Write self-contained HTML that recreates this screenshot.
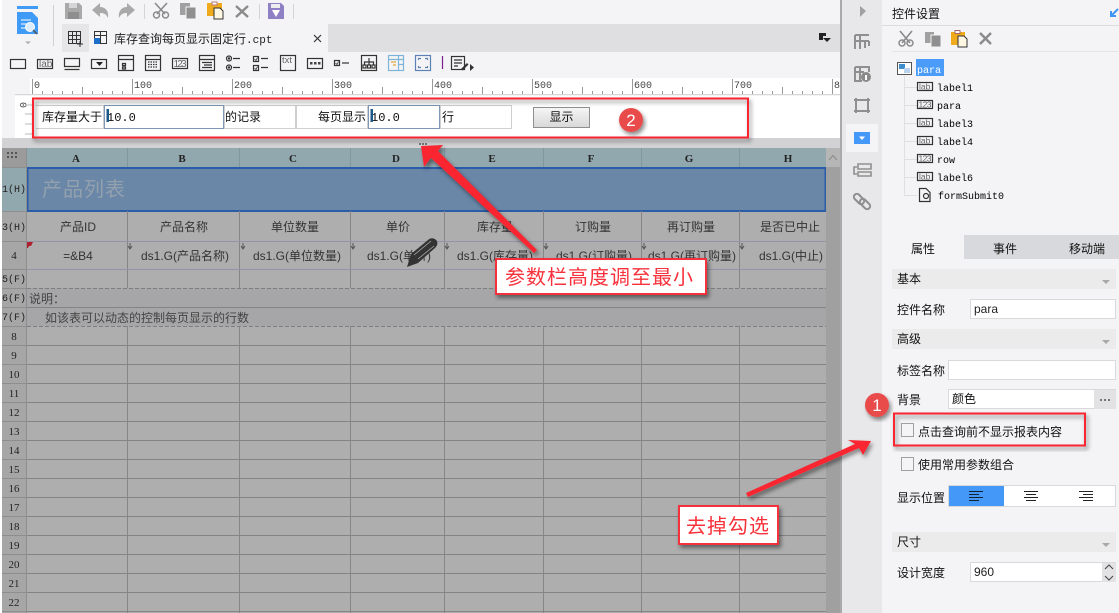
<!DOCTYPE html>
<html><head><meta charset="utf-8"><style>
html,body{margin:0;padding:0;width:1119px;height:613px;overflow:hidden;background:#f4f4f6}
svg{display:block}
text{font-family:"Liberation Sans","Noto Sans CJK SC",sans-serif;font-size:12px;fill:#111}
.m{font-family:"Liberation Mono","Noto Sans CJK SC",monospace}
.h{font-family:"Liberation Serif",serif;font-size:11px;font-weight:bold;fill:#222;text-anchor:middle}
.r{font-family:"Liberation Serif",serif;font-size:11px;fill:#222;text-anchor:middle}
.rm{font-family:"Liberation Mono",monospace;font-size:10px;fill:#222;text-anchor:middle}
.c{fill:#333;text-anchor:middle}
.ru{font-size:10px;fill:#444;font-family:"Liberation Mono",monospace}
.t{font-size:10px;fill:#000;font-family:"Liberation Mono",monospace}
.ic{fill:none;stroke:#333;stroke-width:1.2}
.g{fill:none;stroke:#8f8f8f;stroke-width:2}
.red{fill:#f8323c;font-size:20px}
</style></head><body>
<svg width="1119" height="613" viewBox="0 0 1119 613" xmlns="http://www.w3.org/2000/svg">
<defs>
<filter id="sh" x="-20%" y="-20%" width="140%" height="140%"><feDropShadow dx="2" dy="3" stdDeviation="2" flood-color="#000" flood-opacity=".45"/></filter>
<pattern id="rul" x="32" y="78" width="100" height="17" patternUnits="userSpaceOnUse">
<path d="M.5 1V17M10.5 13V17M20.5 13V17M30.5 13V17M40.5 13V17M50.5 9V17M60.5 13V17M70.5 13V17M80.5 13V17M90.5 13V17" stroke="#999" fill="none"/>
</pattern>
<linearGradient id="btn" x1="0" y1="0" x2="0" y2="1"><stop offset="0" stop-color="#f6f6f6"/><stop offset="1" stop-color="#d8d8d8"/></linearGradient>
</defs>

<!-- base -->
<rect width="1119" height="613" fill="#f4f4f6"/>
<rect x="0" y="0" width="2" height="613" fill="#ffffff"/>

<!-- tab bar -->
<rect x="62" y="24" width="778" height="28" fill="#dfdfe1"/>
<rect x="62" y="24" width="27" height="28" fill="#e6e6e8"/>
<rect x="89" y="24" width="239" height="28" fill="#f4f4f6"/>
<path d="M68.500 31.500H80.500V43.500H68.500ZM68.500 35.500H80.500M68.500 39.500H80.500M72.500 31.500V43.500M76.500 31.500V43.500" fill="none" stroke="#333"/>
<path d="M77 44H83M80 41V47" stroke="#333"/>
<path d="M94.500 31.500H106.500V43.500H94.500ZM94.500 35.500H106.500M100.500 31.500V43.500" fill="none" stroke="#333"/>
<rect x="94" y="38" width="6" height="6" fill="#1c6fc9"/>
<text x="114" y="43" style="font-size:12px;fill:#222">库存查询每页显示固定行<tspan class="m" style="font-size:11px">.cpt</tspan></text>
<path d="M314 35L321 42M321 35L314 42" stroke="#333" stroke-width="1.2"/>
<path d="M819 33H826V36H823V40H819Z" fill="#222"/><path d="M823 38H831L827 42Z" fill="#222"/>

<!-- top toolbar -->
<path d="M17 6H38V9H17Z" fill="#3f9bf5"/>
<path d="M17 12H32L38 18V34H17Z" fill="#3f9bf5"/>
<path d="M21 20H31M21 24H27M21 28H26" stroke="#fff" fill="none"/>
<circle cx="30" cy="27" r="4.500" fill="#dcecfb" stroke="#fff"/>
<path d="M33 30L37 34" stroke="#555" stroke-width="1.500"/>
<path d="M25 41.500H31L28 44Z" fill="#aaa"/>
<path d="M53.500 5V46" stroke="#d0d0d0"/>
<path d="M65 3H79L82 6V19H65Z" fill="#a9a9a9"/><rect x="69" y="3" width="8" height="5" fill="#d5d5d5"/><rect x="68" y="12" width="11" height="7" fill="#8e8e8e"/>
<path d="M92 10L100 3V7C106 7 109 12 108 18C106 14 104 13 100 13V17Z" fill="#a9a9a9"/>
<path d="M135 10L127 3V7C121 7 118 12 119 18C121 14 123 13 127 13V17Z" fill="#a9a9a9"/>
<path d="M144.500 4V19M259.500 4V19M293.500 4V19" stroke="#d4d4d4"/>
<path d="M155 3L165 14M167 3L157 14" stroke="#8a8a8a" stroke-width="1.600" fill="none"/>
<circle cx="156.500" cy="15" r="3" fill="none" stroke="#8a8a8a" stroke-width="1.500"/><circle cx="165.500" cy="15" r="3" fill="none" stroke="#8a8a8a" stroke-width="1.500"/>
<rect x="180" y="3" width="10" height="12" fill="#a0a0a0"/><rect x="186" y="7" width="10" height="12" fill="#8f8f8f" stroke="#f4f4f6"/>
<rect x="207" y="3" width="15" height="13" fill="#f0ab1c"/><rect x="212" y="2" width="5" height="3" fill="#fff" stroke="#b77"/><path d="M214 8H220L223 11V19H214Z" fill="#fdf7e4" stroke="#333"/>
<path d="M236 6L248 17M248 6L236 17" stroke="#8a8a8a" stroke-width="2.400"/>
<path d="M268 3H281L284 6V19H268Z" fill="#8f7fc4"/><rect x="271" y="4" width="9" height="4" fill="#eee"/><path d="M272 10H280L276 17Z" fill="#fff"/>

<!-- widget toolbar -->
<g class="ic" fill="none">
<rect x="10.500" y="59.500" width="15" height="9"/>
<rect x="37.500" y="59.500" width="15" height="9"/>
<path d="M64.500 58.500H79.500V66.500H64.500ZM64.500 69.500H79.500"/>
<rect x="91.500" y="59.500" width="15" height="9"/>
<rect x="118.500" y="55.500" width="15" height="15"/><path d="M118.500 59.500H133.500M122.500 63.500H125.500V65.500H122.500ZM122.500 67H125.500V69H122.500Z"/>
<rect x="145.500" y="55.500" width="15" height="15"/><path d="M145.500 59.500H160.500"/><path d="M148 62H158M148 64.500H158M148 67H158" stroke-dasharray="1.500 1"/>
<rect x="172.500" y="58.500" width="15" height="10"/>
<rect x="199.500" y="55.500" width="15" height="15"/><path d="M199.500 59.500H214.500M202 62.500H212M204 65H212M202 67.500H212"/>
<circle cx="229" cy="58.500" r="2.500"/><circle cx="229" cy="67.500" r="2.500"/><path d="M233 58.500H240M233 67.500H240"/>
<rect x="253.500" y="56.500" width="5" height="5"/><rect x="253.500" y="65.500" width="5" height="5"/><path d="M261 58.500H268M261 67.500H268"/>
<rect x="280.500" y="55.500" width="15" height="15"/>
<rect x="307.500" y="58.500" width="15" height="10"/>
<rect x="334.500" y="60.500" width="5" height="5"/><path d="M342 63H349"/>
<rect x="361.500" y="55.500" width="15" height="15"/><path d="M369 58V62M364.500 65V62H373.500V65M369 62V65"/><rect x="363" y="65" width="3" height="3"/><rect x="367.500" y="65" width="3" height="3"/><rect x="372" y="65" width="3" height="3"/>
<rect x="388.500" y="55.500" width="15" height="15" stroke="#7db4d8"/><path d="M388.500 59.500H403.500M398.500 55.500V70.500M398.500 64.500H403.500" stroke="#7db4d8"/><path d="M391 62H396M393 65H396" stroke="#e8a33a"/>
<rect x="415.500" y="55.500" width="15" height="15" stroke="#5d82b3"/><path d="M418.500 60V58.500H421M425 58.500H427.500V60M418.500 66V67.500H421M425 67.500H427.500V66" stroke="#5d82b3"/>
<path d="M442.500 56V69" stroke="#7a1f8f"/>
<rect x="451.500" y="56.500" width="13" height="13"/><path d="M454 60H462M454 63H462M454 66H458"/>
</g>
<circle cx="229" cy="58.500" r="1.200" fill="#333"/><circle cx="229" cy="67.500" r="1.200" fill="#333"/>
<path d="M254.500 59L256 60.500L257.500 57.500M254.500 68L256 69.500L257.500 66.500M335.500 63L337 64.500L338.500 61.500" fill="none" stroke="#333" stroke-width=".8"/>
<text x="39" y="67" style="font-size:10px;fill:#666">lab</text>
<path d="M96 62H103L99.500 66Z" fill="#222"/>
<text x="173.500" y="67" style="font-size:10px;fill:#666" textLength="13">123</text>
<text x="282" y="63" style="font-size:9.500px;fill:#666">txt</text>
<path d="M310 62h2.500v2.500h-2.500zM314 62h2.500v2.500h-2.500zM318 62h2.500v2.500h-2.500z" fill="#444"/>
<path d="M461 69L467 63L468.500 64.500L462.500 70.500Z" fill="#333"/>
<path d="M470 64L474 67.500L470 71Z" fill="#333"/>

<!-- ruler -->
<rect x="30" y="78" width="810" height="17" fill="#ffffff"/>
<rect x="32" y="78" width="808" height="17" fill="url(#rul)"/>
<rect x="15" y="94" width="825" height="2" fill="#d6d6d6"/>
<text x="34" y="88" class="ru">0</text><text x="134" y="88" class="ru">100</text><text x="234" y="88" class="ru">200</text><text x="334" y="88" class="ru">300</text><text x="434" y="88" class="ru">400</text><text x="534" y="88" class="ru">500</text><text x="634" y="88" class="ru">600</text><text x="734" y="88" class="ru">700</text><text x="834" y="88" class="ru">800</text>

<!-- param area -->
<rect x="2" y="95" width="838" height="43" fill="#f4f4f6"/>
<rect x="15" y="96" width="825" height="42" fill="#ffffff"/>
<text x="24" y="98" class="ru" transform="rotate(90 20 98)">0</text>
<path d="M25 105H32M25 114H32M25 124H32M25 134H32" stroke="#bbb"/>
<g fill="#fff" stroke="#cfcfcf">
<path d="M36 105.500H103.500V128.500H36"/>
<rect x="224.500" y="105.500" width="71" height="23"/>
<rect x="296.500" y="105.500" width="71" height="23"/>
<rect x="440.500" y="105.500" width="71" height="23"/>
</g>
<g fill="#fff" stroke="#7e98b5">
<rect x="104.500" y="105.500" width="119" height="23"/>
<rect x="368.500" y="105.500" width="71" height="23"/>
</g>
<text x="42" y="121">库存量大于</text>
<text x="107" y="121" class="m" style="font-size:12px">10.0</text>
<rect x="106.500" y="109" width="2.500" height="13" fill="#1c5a8c"/>
<text x="225" y="121">的记录</text>
<text x="318" y="121">每页显示</text>
<text x="371" y="121" class="m" style="font-size:12px">10.0</text>
<rect x="370.500" y="109" width="2.500" height="13" fill="#1c5a8c"/>
<text x="442" y="121">行</text>
<rect x="533.500" y="107.500" width="56" height="20" fill="url(#btn)" stroke="#8f8f8f"/>
<text x="561.500" y="121" text-anchor="middle">显示</text>

<!-- splitter -->
<rect x="2" y="138" width="838" height="10" fill="#d2d2d4"/>
<path d="M419 143h2v2h-2zM422 143h2v2h-2zM425 143h2v2h-2z" fill="#777"/>

<!-- grid -->
<rect x="2" y="148" width="838" height="465" fill="#aeaeae"/>
<rect x="2" y="148" width="25" height="465" fill="#a6a6a6"/>
<rect x="27" y="148" width="799" height="19" fill="#92a8af"/>
<rect x="2" y="148" width="25" height="19" fill="#9b9b9b"/>
<rect x="2" y="167" width="25" height="44" fill="#92a8af"/>
<rect x="27" y="288" width="799" height="38" fill="#a6a6a8"/>
<rect x="27.500" y="168" width="798" height="43" fill="#6a87a8" stroke="#2a5ca8" stroke-width="2"/>
<rect x="826" y="148" width="14" height="465" fill="#a0a0a0"/>
<rect x="826" y="148" width="14" height="19" fill="#b6b6b6"/>
<path d="M829 160L833 155.500L837 160" fill="none" stroke="#888"/>
<path d="M7 152h2v2h-2zM11 152h2v2h-2zM15 152h2v2h-2zM7 156h2v2h-2zM11 156h2v2h-2zM15 156h2v2h-2z" fill="#555"/>
<path d="M127.500 148V167M239.500 148V167M350.500 148V167M444.500 148V167M543.500 148V167M641.500 148V167M739.500 148V167" stroke="#82979e"/>
<path d="M127.500 211V288M239.500 211V288M350.500 211V288M444.500 211V288M543.500 211V288M641.500 211V288M739.500 211V288" stroke="#858585"/>
<path d="M127.500 326V613M239.500 326V613M350.500 326V613M444.500 326V613M543.500 326V613M641.500 326V613M739.500 326V613" stroke="#868686"/>
<path d="M27 241.500H826M27 269.500H826" stroke="#9494a8"/>
<path d="M27 288.500H826M27 326.500H826" stroke="#7e7e7e" stroke-dasharray="4 2"/>
<path d="M27 307.500H826M27 345.500H826M27 364.500H826M27 383.500H826M27 402.500H826M27 421.500H826M27 440.500H826M27 459.500H826M27 478.500H826M27 497.500H826M27 516.500H826M27 535.500H826M27 554.500H826M27 573.500H826M27 592.500H826M27 611.500H826" stroke="#848484"/>
<path d="M2 167.500H27M2 211.500H27M2 241.500H27M2 269.500H27M2 288.500H27M2 307.500H27M2 326.500H27M2 345.500H27M2 364.500H27M2 383.500H27M2 402.500H27M2 421.500H27M2 440.500H27M2 459.500H27M2 478.500H27M2 497.500H27M2 516.500H27M2 535.500H27M2 554.500H27M2 573.500H27M2 592.500H27M2 611.500H27M26.500 148V613" stroke="#8e8e8e"/>

<text class="h" x="76" y="162">A</text><text class="h" x="182" y="162">B</text><text class="h" x="293" y="162">C</text><text class="h" x="396" y="162">D</text><text class="h" x="492" y="162">E</text><text class="h" x="591" y="162">F</text><text class="h" x="689" y="162">G</text><text class="h" x="788" y="162">H</text>

<text class="rm" x="14" y="192">1(H)</text><text class="rm" x="14" y="230">3(H)</text><text class="r" x="14" y="259">4</text><text class="rm" x="14" y="282">5(F)</text><text class="rm" x="14" y="301">6(F)</text><text class="rm" x="14" y="320">7(F)</text>
<text class="r" x="14" y="340">8</text><text class="r" x="14" y="359">9</text><text class="r" x="14" y="378">10</text><text class="r" x="14" y="397">11</text><text class="r" x="14" y="416">12</text><text class="r" x="14" y="435">13</text><text class="r" x="14" y="454">14</text><text class="r" x="14" y="473">15</text><text class="r" x="14" y="492">16</text><text class="r" x="14" y="511">17</text><text class="r" x="14" y="530">18</text><text class="r" x="14" y="549">19</text><text class="r" x="14" y="568">20</text><text class="r" x="14" y="587">21</text><text class="r" x="14" y="606">22</text>

<text x="42" y="196" style="font-size:20px;fill:#93a0ae;letter-spacing:1px">产品列表</text>
<text class="c" x="78" y="231">产品ID</text><text class="c" x="184" y="231">产品名称</text><text class="c" x="295" y="231">单位数量</text><text class="c" x="398" y="231">单价</text><text class="c" x="495" y="231">库存量</text><text class="c" x="593" y="231">订购量</text><text class="c" x="691" y="231">再订购量</text><text class="c" x="790" y="231">是否已中止</text>
<text class="c" x="78" y="260">=&amp;B4</text><text class="c" x="185" y="260">ds1.G(产品名称)</text><text class="c" x="297" y="260">ds1.G(单位数量)</text><text class="c" x="399" y="260">ds1.G(单价)</text><text class="c" x="495" y="260">ds1.G(库存量)</text><text class="c" x="594" y="260">ds1.G(订购量)</text><text class="c" x="692" y="260">ds1.G(再订购量)</text><text class="c" x="791" y="260">ds1.G(中止)</text>
<path d="M27 242H33L31 246H29L28 248H27Z" fill="#b0202c"/>
<path d="M130 243V248M128 246L130 249L132 246M243 243V248M241 246L243 249L245 246M353 243V248M351 246L353 249L355 246M447 243V248M445 246L447 249L449 246M546 243V248M544 246L546 249L548 246M644 243V248M642 246L644 249L646 246M742 243V248M740 246L742 249L744 246" fill="none" stroke="#555"/>
<text x="29" y="303" style="fill:#444">说明：</text>
<text x="45" y="322" style="fill:#444">如该表可以动态的控制每页显示的行数</text>

<!-- pencil -->
<path d="M407 267L411 254L428 240C431 237 435 238 437 241C438 244 437 246 435 248L418 263Z" fill="#333"/>
<path d="M414 255L431 241M418 259L434 246" stroke="#aaa" stroke-width=".8"/>

<!-- right sidebar strip -->
<rect x="840" y="0" width="2" height="613" fill="#a9a9a9"/>
<rect x="842" y="0" width="40" height="613" fill="#e8e8ea"/>
<path d="M860 6L866 11L860 17Z" fill="#a0a0a0"/>
<g class="g">
<path d="M855 35H869M855 35V49M860 35V49M855 41H869M869 41V46M865 41V48"/>
<path d="M855 67H869V72M855 67V81H862M855 72H864M860 67V81"/>
<path d="M856 98V113M868 98V113M854 100H870M854 111H870"/>
<path d="M858 164H871V169H858ZM858 172H871V176H858ZM857 167H854V174H857" stroke-width="1.600"/>
<rect x="-6" y="-3" width="12" height="6" rx="3" transform="translate(859 199) rotate(45)"/>
<rect x="-6" y="-3" width="12" height="6" rx="3" transform="translate(865 204) rotate(45)"/>
</g>
<circle cx="866" cy="77" r="5" fill="#8a8a8a"/><rect x="865" y="75" width="2" height="5" fill="#fff"/>
<rect x="846" y="124" width="32" height="28" fill="#f4f4f6"/>
<rect x="854" y="132" width="16" height="12" fill="#4499f8"/>
<path d="M859 136.500H865L862 140Z" fill="#fff"/>

<!-- right panel -->
<rect x="882" y="0" width="237" height="613" fill="#f4f4f6"/>
<text x="892" y="18">控件设置</text>
<path d="M1111 16L1118 9M1111 11V16H1116" stroke="#3f96f2" stroke-width="2" fill="none"/>
<path d="M882 25.500H1119" stroke="#dcdcde"/>
<path d="M900 31L910 43M912 31L902 43" stroke="#8a8a8a" stroke-width="1.600"/>
<circle cx="902" cy="43" r="3" fill="none" stroke="#8a8a8a" stroke-width="1.500"/><circle cx="910" cy="43" r="3" fill="none" stroke="#8a8a8a" stroke-width="1.500"/>
<rect x="925" y="32" width="9" height="11" fill="#a0a0a0"/><rect x="931" y="35" width="10" height="12" fill="#8f8f8f" stroke="#f4f4f6"/>
<rect x="951" y="32" width="14" height="13" fill="#f0ab1c"/><rect x="955" y="30.500" width="5" height="3" fill="#fff" stroke="#a66"/><path d="M958 36H964L967 39V47H958Z" fill="#fdf7e4" stroke="#333"/>
<path d="M980 33L991 44M991 33L980 44" stroke="#8a8a8a" stroke-width="2.400"/>
<path d="M892 51.500H1118" stroke="#e4e4e6"/>

<rect x="897.500" y="62.500" width="14" height="12" fill="#fff" stroke="#555"/>
<rect x="899" y="64" width="6" height="5" fill="#3d8ccc"/><rect x="904" y="68" width="6" height="5" fill="#b9d3ee"/>
<rect x="916" y="59" width="28" height="17" fill="#4a9cf8"/>
<text x="917" y="73" class="t" style="fill:#fff">para</text>
<path d="M904.500 76V195.500H917M904.500 87.500H917M904.500 105.500H917M904.500 123.500H917M904.500 141.500H917M904.500 159.500H917M904.500 177.500H917" stroke="#e0e0e2" fill="none"/>
<g class="ic"><rect x="917.500" y="82.500" width="15" height="8"/><rect x="917.500" y="100.500" width="15" height="8"/><rect x="917.500" y="118.500" width="15" height="8"/><rect x="917.500" y="136.500" width="15" height="8"/><rect x="917.500" y="154.500" width="15" height="8"/><rect x="917.500" y="172.500" width="15" height="8"/>
<path d="M919.500 188.500H926L930 192.500V201.500H919.500Z"/><circle cx="926" cy="196" r="2.500"/></g>
<text x="919" y="89.500" style="font-size:8.500px;fill:#666">lab</text><text x="918.500" y="107.500" style="font-size:8.500px;fill:#666" textLength="13">123</text><text x="919" y="125.500" style="font-size:8.500px;fill:#666">lab</text><text x="919" y="143.500" style="font-size:8.500px;fill:#666">lab</text><text x="918.500" y="161.500" style="font-size:8.500px;fill:#666" textLength="13">123</text><text x="919" y="179.500" style="font-size:8.500px;fill:#666">lab</text>
<text x="937" y="91" class="t">label1</text><text x="937" y="109" class="t">para</text><text x="937" y="127" class="t">label3</text><text x="937" y="145" class="t">label4</text><text x="937" y="163" class="t">row</text><text x="937" y="181" class="t">label6</text><text x="938" y="199" class="t">formSubmit0</text>

<rect x="964" y="235" width="155" height="24" fill="#d8d9dc"/>
<text x="911" y="253">属性</text><text x="993" y="253">事件</text><text x="1069" y="253">移动端</text>

<g fill="#ebebeb"><rect x="892" y="269" width="224" height="20"/><rect x="892" y="329" width="224" height="20"/><rect x="892" y="532" width="224" height="20"/></g>
<path d="M1102 280H1110L1106 284ZM1102 340H1110L1106 344ZM1102 543H1110L1106 547Z" fill="#a8a8a8"/>
<text x="897" y="283">基本</text><text x="897" y="343">高级</text><text x="897" y="546">尺寸</text>
<text x="897" y="314">控件名称</text>
<g fill="#fff" stroke="#d9d9db">
<rect x="970.500" y="299.500" width="145" height="19"/>
<rect x="948.500" y="360.500" width="167" height="19"/>
<rect x="948.500" y="389.500" width="167" height="19"/>
<rect x="970.500" y="562.500" width="145" height="19"/>
<rect x="948.500" y="485.500" width="167" height="21"/>
</g>
<text x="974" y="313" style="fill:#222">para</text>
<text x="897" y="375">标签名称</text>
<text x="897" y="404">背景</text>
<text x="952" y="403">颜色</text>
<rect x="1094" y="390" width="22" height="19" fill="#e2e2e4"/>
<path d="M1100 399h2v2h-2zM1104 399h2v2h-2zM1108 399h2v2h-2z" fill="#777"/>

<rect x="901.500" y="423.500" width="12" height="13" fill="#f4f4f6" stroke="#a0a0a0"/>
<text x="918" y="436">点击查询前不显示报表内容</text>
<rect x="901.500" y="457.500" width="12" height="13" fill="#f4f4f6" stroke="#a0a0a0"/>
<text x="918" y="469">使用常用参数组合</text>
<text x="897" y="502">显示位置</text>
<rect x="949" y="486" width="55" height="20" fill="#4499f8"/>
<path d="M969 491.500H983M969 494.500H979M969 497.500H983M969 500.500H979" stroke="#123" fill="none"/>
<path d="M1024 491.500H1038M1026 494.500H1036M1024 497.500H1038M1026 500.500H1036" stroke="#222" fill="none"/>
<path d="M1079 491.500H1093M1083 494.500H1093M1079 497.500H1093M1083 500.500H1093" stroke="#222" fill="none"/>
<text x="897" y="577">设计宽度</text>
<text x="974" y="576" style="fill:#222">960</text>
<rect x="1102" y="563" width="14" height="19" fill="#e2e2e4"/>
<path d="M1105 569L1109 565L1113 569M1105 576L1109 580L1113 576" fill="none" stroke="#444"/>

<!-- annotations -->
<g filter="url(#sh)">
<rect x="33" y="98.500" width="715" height="39" fill="none" stroke="#f92832" stroke-width="2"/>
</g>
<g filter="url(#sh)"><circle cx="631" cy="120" r="12" fill="#e94b4b"/></g>
<text x="631" y="126" text-anchor="middle" style="font-size:17px;fill:#fff">2</text>
<g filter="url(#sh)">
<path d="M534 253L537 250L438 151L443 145L421 146L424 167L431 158Z" fill="#f92832"/>
</g>
<g filter="url(#sh)"><rect x="496" y="259" width="210" height="35" fill="#fff" stroke="#f4323c" stroke-width="2"/></g>
<text x="505" y="284" class="red" textLength="188" lengthAdjust="spacing">参数栏高度调至最小</text>

<g filter="url(#sh)"><rect x="894" y="413.500" width="191" height="32" fill="none" stroke="#f92832" stroke-width="2"/></g>
<g filter="url(#sh)"><circle cx="877" cy="405" r="12" fill="#e94b4b"/></g>
<text x="877" y="411" text-anchor="middle" style="font-size:17px;fill:#fff">1</text>
<g filter="url(#sh)">
<path d="M746 493L748 497L859 448L863 455L871 441L848 440L855 444Z" fill="#f92832"/>
</g>
<g filter="url(#sh)"><rect x="679" y="506" width="99" height="38" fill="#fff" stroke="#f4323c" stroke-width="2"/></g>
<text x="686" y="533" class="red" textLength="83" lengthAdjust="spacing">去掉勾选</text>
</svg>
</body></html>
